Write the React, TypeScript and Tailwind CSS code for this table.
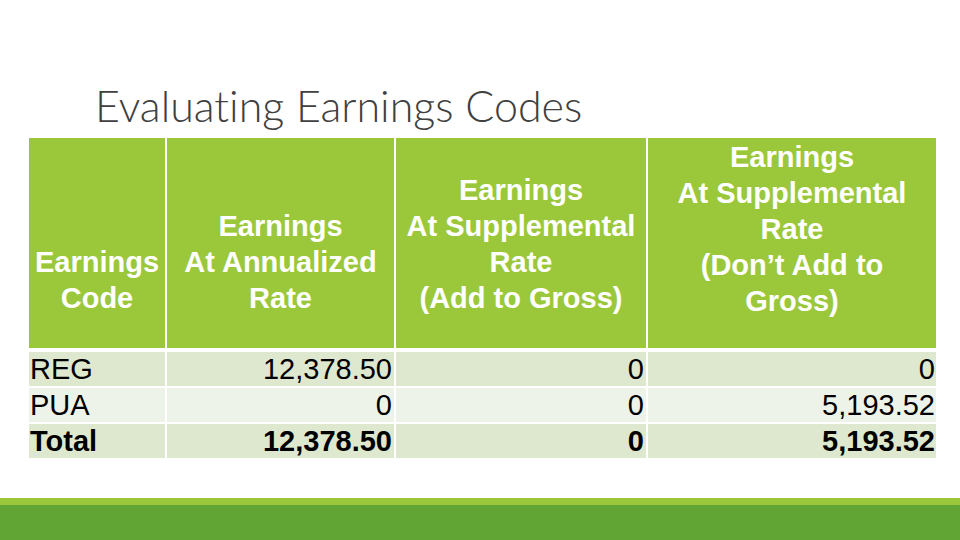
const HEADERS: { lines: string[]; pb: string }[] = [
  { lines: ["Earnings", "Code"], pb: "pb-[32px]" },
  { lines: ["Earnings", "At Annualized", "Rate"], pb: "pb-[32px]" },
  { lines: ["Earnings", "At Supplemental", "Rate", "(Add to Gross)"], pb: "pb-[32px]" },
  { lines: ["Earnings", "At Supplemental", "Rate", "(Don’t Add to", "Gross)"], pb: "pb-[29px]" },
];

const ROWS = [
  { code: "REG", annualized: "12,378.50", addGross: "0", noAdd: "0", bg: "bg-[#dde8cf]", bold: false },
  { code: "PUA", annualized: "0", addGross: "0", noAdd: "5,193.52", bg: "bg-[#eef3e9]", bold: false },
  { code: "Total", annualized: "12,378.50", addGross: "0", noAdd: "5,193.52", bg: "bg-[#dde8cf]", bold: true },
];

export default function App() {
  return (
    <div className="w-[960px] h-[540px] bg-white flex flex-col overflow-hidden">
      {/* slide title */}
      <div
        className="pl-[95px] pt-[80px] h-[138px] text-[43px] leading-[52px] font-light text-[#404040] [font-variant-ligatures:none]"
        style={{ fontFamily: "Lato, 'Open Sans', sans-serif" }}
      >
        Evaluating Earnings Codes
      </div>

      <div
        className="ml-[29px] grid grid-cols-[136px_227px_250px_288px] gap-x-[2px] gap-y-[2px] text-[29px]"
        style={{ fontFamily: "'Liberation Sans', Arial, sans-serif" }}
      >
        {HEADERS.map((h, i) => (
          <div
            key={i}
            className={`h-[210px] mb-[2px] bg-[#9bc83a] flex flex-col justify-end items-center text-white font-bold leading-[36px] text-center ${h.pb}`}
          >
            {h.lines.map((l) => (
              <div key={l} className="whitespace-nowrap">{l}</div>
            ))}
          </div>
        ))}

        {ROWS.map((r) => (
          <div key={r.code} className="contents">
            <div className={`${r.bg} h-[34px] leading-[34px] pl-[1px] text-black ${r.bold ? "font-bold" : ""}`}>
              {r.code}
            </div>
            <div className={`${r.bg} h-[34px] leading-[34px] pr-[2px] text-right text-black ${r.bold ? "font-bold" : ""}`}>
              {r.annualized}
            </div>
            <div className={`${r.bg} h-[34px] leading-[34px] pr-[2px] text-right text-black ${r.bold ? "font-bold" : ""}`}>
              {r.addGross}
            </div>
            <div className={`${r.bg} h-[34px] leading-[34px] pr-[1px] text-right text-black ${r.bold ? "font-bold" : ""}`}>
              {r.noAdd}
            </div>
          </div>
        ))}
      </div>

      <div className="flex-1" />
      <div className="h-[7px] bg-[#9bc83a]" />
      <div className="h-[35px] bg-[#61a534]" />
    </div>
  );
}
